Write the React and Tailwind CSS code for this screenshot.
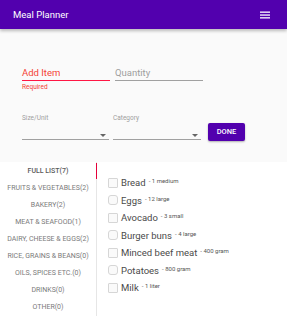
import React from 'react';

const categories = [
  'FULL LIST(7)',
  'FRUITS & VEGETABLES(2)',
  'BAKERY(2)',
  'MEAT & SEAFOOD(1)',
  'DAIRY, CHEESE & EGGS(2)',
  'RICE, GRAINS & BEANS(0)',
  'OILS, SPICES ETC.(0)',
  'DRINKS(0)',
  'OTHER(0)',
];

const items = [
  { name: 'Bread', qty: '1 medium' },
  { name: 'Eggs', qty: '12 large' },
  { name: 'Avocado', qty: '3 small' },
  { name: 'Burger buns', qty: '4 large' },
  { name: 'Minced beef meat', qty: '400 gram' },
  { name: 'Potatoes', qty: '800 gram' },
  { name: 'Milk', qty: '1 liter' },
];

const SelectField = ({ label, className = '' }) => (
  <div className={`flex flex-col ${className}`}>
    <span className="text-[6.5px] text-[#9e9e9e] leading-none">{label}</span>
    <div className="relative mt-[11px] h-[8px] border-b border-[#a0a0a0]">
      <span className="absolute right-[3px] top-[2px] w-0 h-0 border-l-[3px] border-r-[3px] border-t-[3px] border-l-transparent border-r-transparent border-t-[#666]" />
    </div>
  </div>
);

export default function App() {
  return (
    <div className="w-[287px] h-[316px] bg-[#fafafa] flex flex-col overflow-hidden" style={{ fontFamily: 'Roboto, "Liberation Sans", sans-serif' }}>
      <header className="h-[29px] shrink-0 bg-[#5200ae] flex items-center justify-between pl-[13px] pr-[17px] shadow-[0_2px_3px_rgba(0,0,0,0.25)] z-10">
        <span className="text-white text-[9.5px] leading-none">Meal Planner</span>
        <svg width="10" height="8" viewBox="0 0 10 8">
          <rect x="0" y="0.5" width="10" height="1.3" fill="white" />
          <rect x="0" y="3.4" width="10" height="1.3" fill="white" />
          <rect x="0" y="6.2" width="10" height="1.3" fill="white" />
        </svg>
      </header>

      <div className="pl-[22px] pt-[36px]">
        <div className="flex gap-[5px]">
          <div className="w-[88px] flex flex-col">
            <div className="h-[16px] border-b-[1.5px] border-[#ff1744] flex items-center">
              <span className="text-[9.5px] text-[#f44336] leading-none">Add Item</span>
            </div>
            <span className="mt-[3px] text-[6.5px] text-[#f44336] leading-none">Required</span>
          </div>
          <div className="w-[88px] h-[16px] border-b border-[#a0a0a0] flex items-center">
            <span className="text-[9.5px] text-[#9e9e9e] leading-none">Quantity</span>
          </div>
        </div>

        <div className="flex items-end mt-[24px]">
          <SelectField label="Size/Unit" className="w-[87px]" />
          <SelectField label="Category" className="w-[88px] ml-[4px]" />
          <button className="ml-[7px] mb-[-1px] w-[37px] h-[18px] rounded-[2px] bg-[#5200ae] text-white text-[7.5px] font-medium shadow-[0_1px_2px_rgba(0,0,0,0.3)]">
            DONE
          </button>
        </div>
      </div>

      <div className="mt-[22px] h-[154px] bg-white flex">
        <div className="w-[97px] shrink-0 border-r border-[#e6e6e6] flex flex-col pt-[1px]">
          {categories.map((c, i) => (
            <div key={c} className={`relative h-[17px] flex items-center justify-center text-[7px] leading-none ${i === 0 ? 'text-[#5a5a5a] font-medium' : 'text-[#7a7a7a]'}`}>
              {c}
              {i === 0 && <span className="absolute right-[-1px] top-0 w-[1.5px] h-[16px] bg-[#e5003a]" />}
            </div>
          ))}
        </div>
        <div className="flex flex-col pl-[11px] pt-[12px]">
          {items.map((it, i) => (
            <div key={it.name} className="h-[17.5px] flex items-center">
              <span className={`w-[10px] h-[10px] border border-[#d6d6d6] bg-[#fafafa] ${i % 2 ? 'rounded-[3px]' : 'rounded-[1px]'}`} />
              <span className="ml-[3px] text-[9.5px] text-[#4a4a4a] leading-none">{it.name}</span>
              <span className="ml-[3px] text-[6px] text-[#555] leading-none mt-[-3px]">- {it.qty}</span>
            </div>
          ))}
        </div>
      </div>
    </div>
  );
}
